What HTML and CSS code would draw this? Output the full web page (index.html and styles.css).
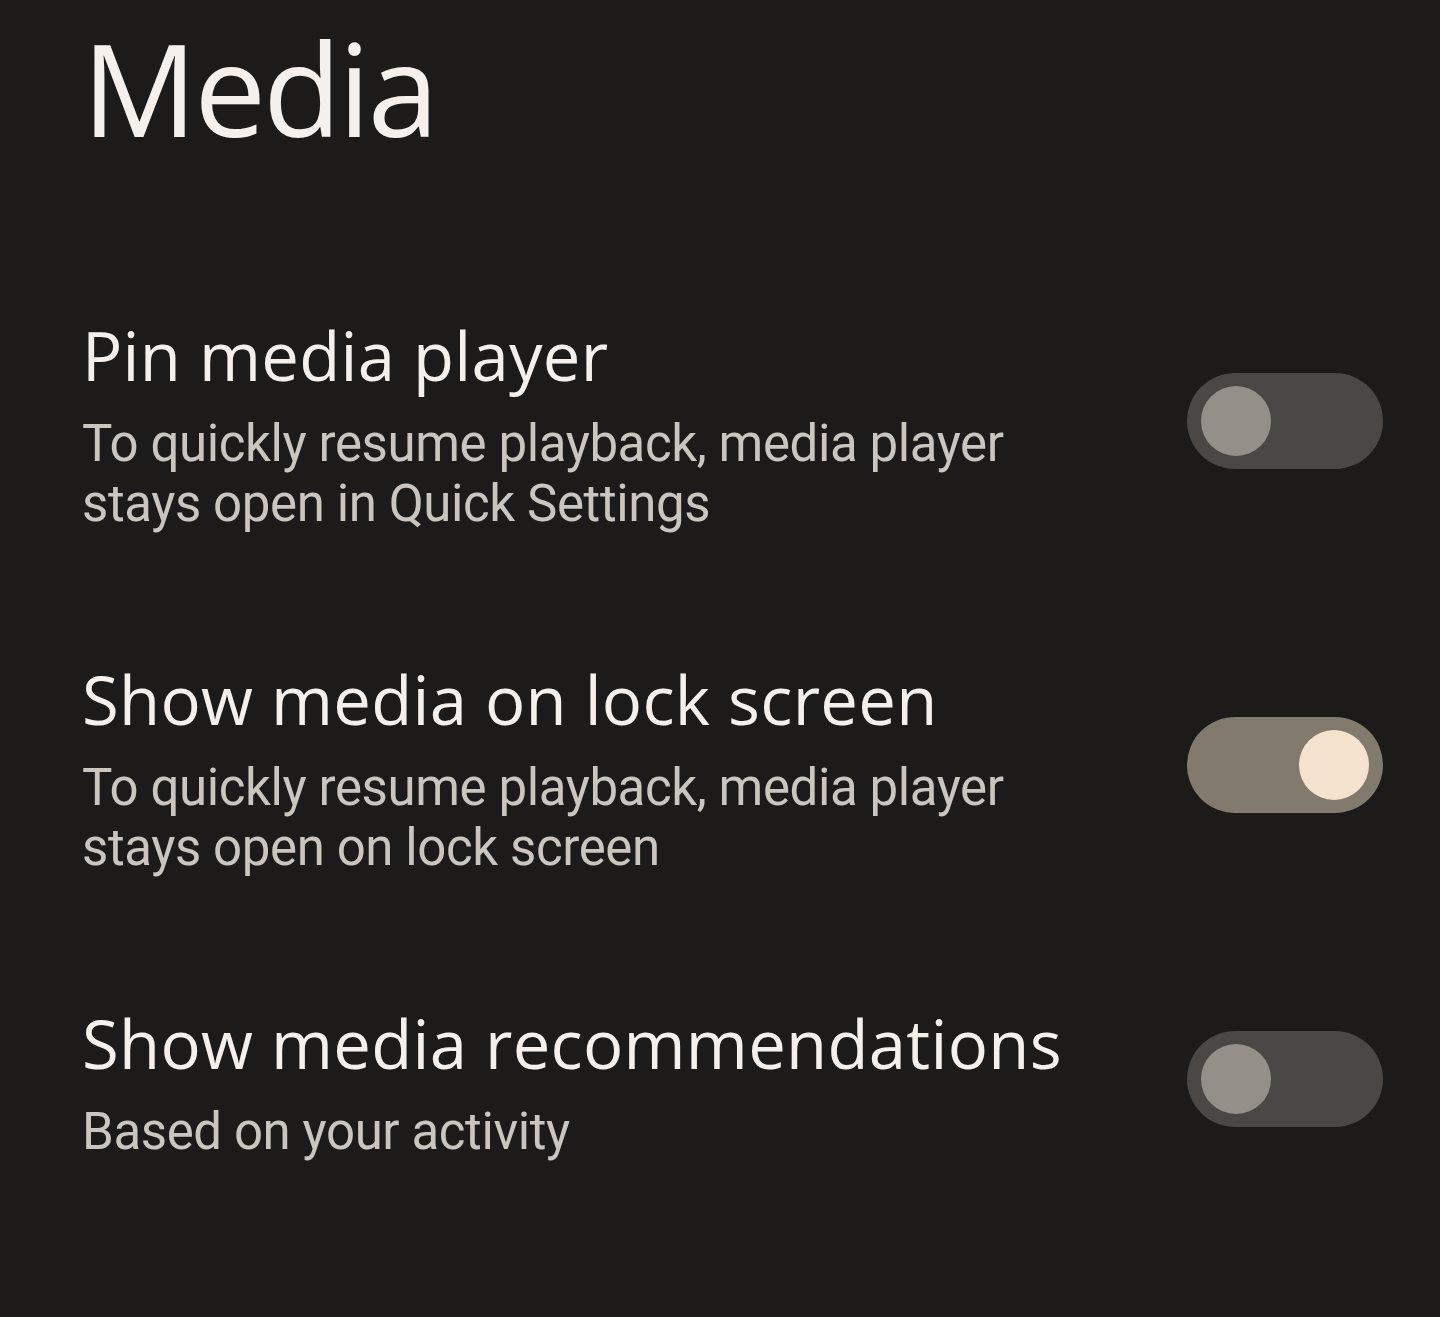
FILE: index.html
```html
<!DOCTYPE html>
<html lang="en">
<head>
<meta charset="utf-8">
<title>Media</title>
<link rel="stylesheet" href="styles.css">
</head>
<body>
<main class="page">
  <h1 class="page-title">Media</h1>
  <section class="list">
    <div class="row">
      <div class="text">
        <div class="title">Pin media player</div>
        <div class="summary">To quickly resume playback, media player<br>stays open in Quick Settings</div>
      </div>
      <div class="switch"><div class="thumb"></div></div>
    </div>
    <div class="row">
      <div class="text">
        <div class="title">Show media on lock screen</div>
        <div class="summary">To quickly resume playback, media player<br>stays open on lock screen</div>
      </div>
      <div class="switch on"><div class="thumb"></div></div>
    </div>
    <div class="row">
      <div class="text">
        <div class="title">Show media recommendations</div>
        <div class="summary">Based on your activity</div>
      </div>
      <div class="switch"><div class="thumb"></div></div>
    </div>
  </section>
</main>
</body>
</html>
```
FILE: styles.css
```css
html, body {
  margin: 0;
  padding: 0;
  background: #1c1b19;
}
.page {
  width: 1440px;
  height: 1317px;
  box-sizing: border-box;
  padding: 0 57px 0 82px;
  font-family: "Open Sans", "Roboto", sans-serif;
}
.page-title {
  margin: 0;
  padding-top: 13px;
  height: 249px;
  box-sizing: border-box;
  font-family: "Open Sans", sans-serif;
  font-weight: 400;
  font-size: 128px;
  line-height: 150px;
  color: #f6f0ec;
  letter-spacing: -3px;
}
.list {
  display: flex;
  flex-direction: column;
}
.row {
  display: flex;
  align-items: center;
  justify-content: space-between;
  padding: 59px 0;
}
.text {
  display: flex;
  flex-direction: column;
  padding-top: 7px;
}
.title {
  font-family: "Open Sans", sans-serif;
  font-size: 67px;
  line-height: 80px;
  letter-spacing: 0.3px;
  color: #f6f0ec;
}
.summary {
  margin-top: 19px;
  font-family: "Roboto", sans-serif;
  font-size: 51px;
  line-height: 60px;
  letter-spacing: -0.4px;
  color: #cbc5bf;
}
.switch {
  width: 196px;
  height: 96px;
  border-radius: 48px;
  background: #4a4744;
  box-sizing: border-box;
  display: flex;
  align-items: center;
  padding: 0 14px;
  flex-shrink: 0;
}
.switch .thumb {
  width: 70px;
  height: 70px;
  border-radius: 50%;
  background: #949089;
}
.switch.on {
  background: #837a6e;
  justify-content: flex-end;
}
.switch.on .thumb {
  background: #f5e2cf;
}
```
